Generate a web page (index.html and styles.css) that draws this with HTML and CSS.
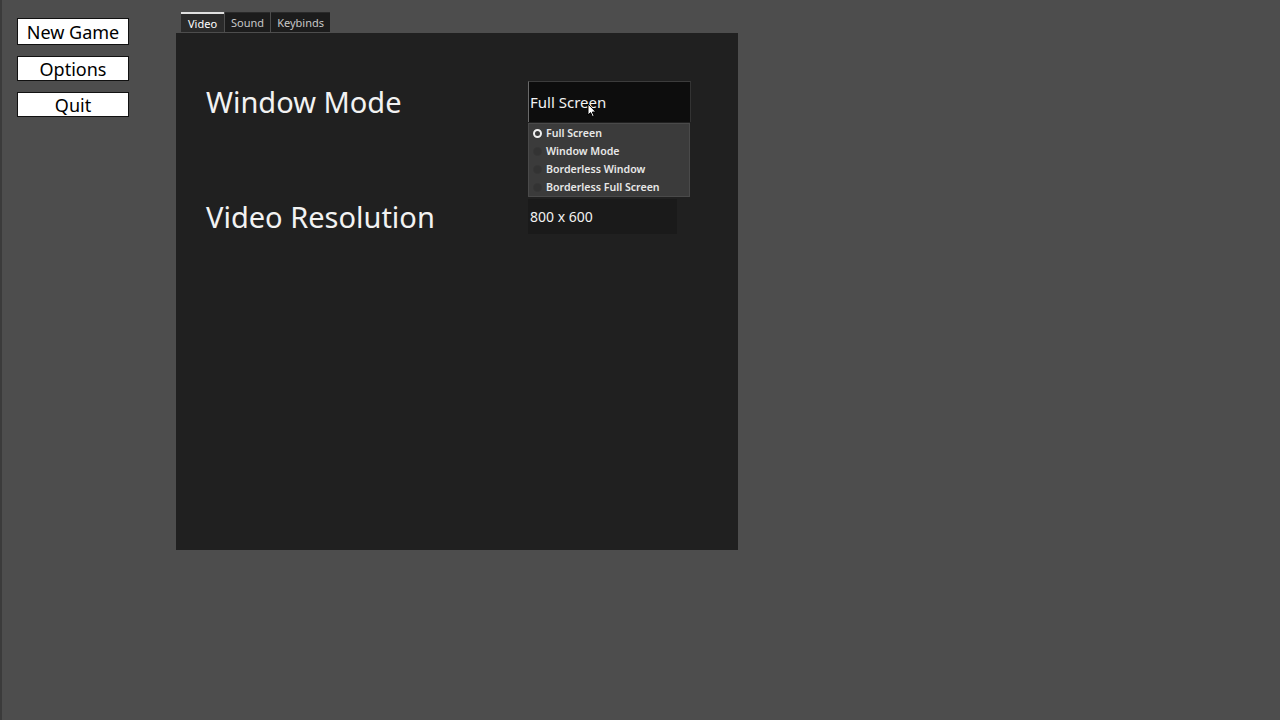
FILE: index.html
```html
<!DOCTYPE html>
<html lang="en">
<head>
    <meta charset="UTF-8">
    <title>Options</title>
    <link rel="stylesheet" href="styles.css">
</head>
<body>
    <div class="main-menu">
        <button class="menu-button tall">New Game</button>
        <button class="menu-button">Options</button>
        <button class="menu-button">Quit</button>
    </div>

    <div class="settings">
        <div class="tab-bar">
            <div class="tab active">Video</div>
            <div class="tab">Sound</div>
            <div class="tab">Keybinds</div>
        </div>

        <div class="panel">
            <div class="setting-label">Window Mode</div>
            <div class="option-wrap">
                <div class="option-button open">Full Screen</div>
                <div class="popup">
                    <div class="popup-item"><span class="radio checked"></span>Full Screen</div>
                    <div class="popup-item"><span class="radio"></span>Window Mode</div>
                    <div class="popup-item"><span class="radio"></span>Borderless Window</div>
                    <div class="popup-item"><span class="radio"></span>Borderless Full Screen</div>
                </div>
                <svg class="cursor" width="10" height="15" viewBox="0 0 10 15">
                    <path d="M1 1 L1 12 L3.6 9.6 L5.6 14 L7.2 13.3 L5.3 9 L8.8 9 Z" fill="#fff" stroke="#000" stroke-width="1"/>
                </svg>
            </div>

            <div class="setting-label">Video Resolution</div>
            <div class="option-wrap">
                <div class="option-button small">800 x 600</div>
            </div>
        </div>
    </div>
</body>
</html>
```

FILE: styles.css
```css
body {
    margin: 0;
    height: 720px;
    display: flex;
    align-items: flex-start;
    background-color: #4d4d4d;
    border-left: 2px solid #3b3b3b;
    box-sizing: border-box;
    font-family: "Noto Sans", "Open Sans", sans-serif;
    overflow: hidden;
}

.main-menu {
    display: flex;
    flex-direction: column;
    gap: 11px;
    padding: 18px 0 0 15px;
    width: 112px;
}

.menu-button {
    height: 25px;
    padding: 0;
    background-color: #fff;
    color: #000;
    border: 1px solid #111;
    font-family: "Noto Sans", sans-serif;
    font-size: 18px;
    line-height: 1;
}

.menu-button.tall {
    height: 27px;
}

.settings {
    margin-left: 47px;
    padding-top: 12px;
    display: flex;
    flex-direction: column;
}

.tab-bar {
    display: flex;
    gap: 1px;
    padding-left: 5px;
}

.tab {
    height: 20px;
    padding: 0 6px;
    box-sizing: border-box;
    background-color: #1c1c1c;
    color: #c8c8c8;
    font-size: 11px;
    line-height: 20px;
    border-top: 1px solid #2a2a2a;
}

.tab.active {
    padding: 0 7px;
    background-color: #2a2a2a;
    color: #fff;
    border-top: 2px solid #e0e0e0;
    line-height: 19px;
}

.panel {
    width: 562px;
    height: 517px;
    margin-top: 1px;
    background-color: #202020;
    box-sizing: border-box;
    padding: 48px 0 0 30px;
    display: grid;
    grid-template-columns: 322px 163px;
    grid-template-rows: 41px 35px;
    row-gap: 77px;
    align-content: start;
}

.setting-label {
    color: #f2f2f2;
    font-size: 29px;
    display: flex;
    align-items: center;
}

.option-wrap {
    position: relative;
}

.option-button {
    height: 41px;
    box-sizing: border-box;
    background-color: #0d0d0d;
    border-top: 1px solid #3c3c3c;
    border-left: 1px solid #6a6a6a;
    border-right: 1px solid #333;
    color: #f2f2f2;
    font-size: 15px;
    padding-left: 1px;
    display: flex;
    align-items: center;
}

.option-button.small {
    width: 149px;
    height: 35px;
    background-color: #1a1a1a;
    border: none;
    padding-left: 2px;
    font-size: 14px;
}

.popup {
    position: absolute;
    top: 42px;
    left: 0;
    width: 162px;
    height: 74px;
    box-sizing: border-box;
    background-color: #3b3b3b;
    border: 1px solid #4a4a4a;
    padding-top: 0;
}

.popup-item {
    height: 18px;
    display: flex;
    align-items: center;
    color: #e8e8e8;
    font-size: 10.6px;
    font-weight: 600;
}

.radio {
    width: 7px;
    height: 7px;
    margin: 0 4px 0 4px;
    border-radius: 50%;
    background-color: #333;
    border: 1px solid #363636;
}

.radio.checked {
    background-color: #3b3b3b;
    border: 2px solid #f0f0f0;
    width: 5px;
    height: 5px;
}

.cursor {
    position: absolute;
    left: 59px;
    top: 22px;
}
```
